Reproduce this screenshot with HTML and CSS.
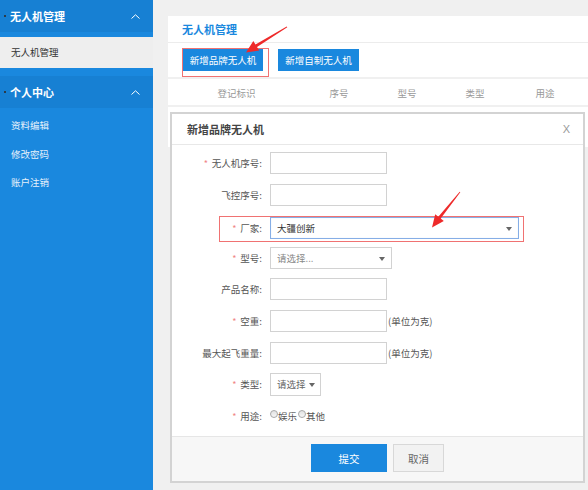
FILE: index.html
```html
<!DOCTYPE html>
<html lang="zh">
<head>
<meta charset="utf-8">
<title>无人机管理</title>
<link rel="stylesheet" href="styles.css">
</head>
<body>
<div class="page">
  <aside class="sidebar">
    <div class="side-head"><span class="dot"></span><span class="side-title">无人机管理</span>
      <svg class="chev" width="9" height="5" viewBox="0 0 9 5"><polyline points="0.5,4.5 4.5,0.8 8.5,4.5" fill="none" stroke="#fff" stroke-width="1"/></svg>
    </div>
    <div class="side-item active">无人机管理</div>
    <div class="side-head second"><span class="dot"></span><span class="side-title">个人中心</span>
      <svg class="chev" width="9" height="5" viewBox="0 0 9 5"><polyline points="0.5,4.5 4.5,0.8 8.5,4.5" fill="none" stroke="#fff" stroke-width="1"/></svg>
    </div>
    <div class="side-list">
      <div class="side-item">资料编辑</div>
      <div class="side-item">修改密码</div>
      <div class="side-item">账户注销</div>
    </div>
  </aside>
  <main class="main">
    <section class="card">
      <div class="card-title">无人机管理</div>
      <div class="toolbar">
        <button class="btn">新增品牌无人机</button>
        <button class="btn">新增自制无人机</button>
      </div>
      <div class="thead">
        <div>登记标识</div><div>序号</div><div>型号</div><div>类型</div><div>用途</div><div></div>
      </div>
      <div class="tbody"></div>
    </section>
  </main>
</div>

<div class="mark mark-btn"></div>

<div class="modal">
  <div class="modal-head"><span class="modal-title">新增品牌无人机</span><span class="close">X</span></div>
  <div class="modal-body">
    <div class="row"><label class="lbl"><span class="star">*</span>无人机序号:</label><span class="input"></span></div>
    <div class="row"><label class="lbl">飞控序号:</label><span class="input"></span></div>
    <div class="row factory"><label class="lbl"><span class="star">*</span>厂家:</label><span class="select focus w-lg">大疆创新<i class="tri"></i></span></div>
    <div class="row"><label class="lbl"><span class="star">*</span>型号:</label><span class="select placeholder w-md">请选择...<i class="tri"></i></span></div>
    <div class="row"><label class="lbl">产品名称:</label><span class="input"></span></div>
    <div class="row"><label class="lbl"><span class="star">*</span>空重:</label><span class="input"></span><span class="unit">(单位为克)</span></div>
    <div class="row"><label class="lbl">最大起飞重量:</label><span class="input"></span><span class="unit">(单位为克)</span></div>
    <div class="row"><label class="lbl"><span class="star">*</span>类型:</label><span class="select sm w-sm">请选择<i class="tri"></i></span></div>
    <div class="row"><label class="lbl"><span class="star">*</span>用途:</label><span class="radio"></span><span class="rtext">娱乐</span><span class="radio"></span><span class="rtext">其他</span></div>
    <div class="mark mark-row"></div>
  </div>
  <div class="modal-foot">
    <button class="fbtn primary">提交</button>
    <button class="fbtn">取消</button>
  </div>
</div>

<svg class="arrows" width="588" height="490" viewBox="0 0 588 490">
  <polygon fill="#ee2a2a" points="287.3,27.3 257.0,47.0 259.3,50.4 246,52.5 253.3,41.1 255.5,44.4 286.7,26.6"/>
  <polygon fill="#ee2a2a" points="460.3,192.2 440.7,218.6 443.8,221.1 432,227.5 435.2,214.2 438.3,216.7 459.7,191.7"/>
</svg>
</body>
</html>
```
FILE: styles.css
```css
* { box-sizing: border-box; margin: 0; padding: 0; }
html, body { width: 588px; height: 490px; overflow: hidden; }
body {
  background: #f0f0f0;
  font-family: "Noto Sans CJK SC", "Noto Sans", sans-serif;
  color: #333;
  position: relative;
}
.page { display: flex; height: 490px; }

.sidebar { width: 153px; background: #1a88de; flex: none; }
.side-head {
  height: 32px; background: #1780d3; display: flex; align-items: center;
  position: relative; padding-left: 4px;
}
.side-head.second { margin-top: 8px; }
.dot { width: 2px; height: 2px; background: #2b3b4a; margin-right: 4px; }
.side-title { color: #fff; font-weight: bold; font-size: 11px; }
.chev { position: absolute; left: 131px; top: 14px; }
.side-item { height: 31px; line-height: 31px; padding-left: 11px; font-size: 9.5px; color: #e6f1fb; }
.side-item.active { background: #eeeeee; color: #333; margin-top: 5px; }
.side-list { padding-top: 3px; }
.side-list .side-item { height: 28.5px; line-height: 28.5px; }

.main { flex: 1; padding: 16px 0 0 15px; }
.card { background: #fff; width: 420px; }
.card-title {
  height: 27px; line-height: 27px; padding-left: 14px; font-size: 11px; font-weight: bold;
  color: #1a88de; border-bottom: 1px solid #ececec;
}
.toolbar { display: flex; gap: 15px; padding: 6px 0 6px 15px; border-bottom: 2px solid #f0f0f0; }
.btn {
  height: 22px; width: 80px; background: #1a88de; color: #fff; border: none;
  font-family: inherit; font-size: 9.5px;
}
.toolbar .btn + .btn { width: 81px; }
.thead {
  display: grid; grid-template-columns: 137px 68px 68px 68px 72px 1fr;
  height: 28px; line-height: 28px; font-size: 9.5px; color: #999; text-align: center;
  border-bottom: 2px solid #f0f0f0;
}
.tbody { height: 40px; }

.mark { position: absolute; border: 1px solid #f07272; pointer-events: none; }
.mark-btn { left: 182px; top: 48px; width: 87px; height: 29px; }

.modal {
  position: absolute; left: 170px; top: 112px; width: 415px; height: 371px;
  background: #fff; border: 2px solid #d3d3d3; display: flex; flex-direction: column;
}
.modal-head {
  height: 31px; border-bottom: 1px solid #e8e8e8; display: flex; align-items: center;
  justify-content: space-between; padding: 0 13px 0 15px; flex: none;
}
.modal-title { font-size: 11px; font-weight: bold; color: #444; }
.close { font-family: "Liberation Sans", sans-serif; font-size: 11px; color: #9a9a9a; }
.modal-body { flex: 1; position: relative; display: flex; flex-direction: column; gap: 9.6px; padding-top: 7px; }
.row { display: flex; align-items: center; height: 22px; }
.row.factory { margin-top: 1.5px; margin-bottom: -1.5px; }
.lbl { width: 90px; text-align: right; font-size: 9.5px; color: #555; margin-right: 8px; flex: none; }
.star { color: #f08585; margin-right: 4px; font-size: 9px; }
.input { width: 117px; height: 22px; border: 1px solid #d2d2d2; background: #fff; }
.unit { font-size: 9.5px; color: #555; margin-left: 1px; }
.select {
  height: 22px; border: 1px solid #d2d2d2; font-size: 9.5px; color: #333;
  display: flex; align-items: center; padding-left: 6px; position: relative;
}
.select.focus { border-color: #86aee6; box-shadow: inset 0 0 1px #c9dcf5; }
.select.placeholder { color: #888; }
.select.sm { color: #666; }
.w-lg { width: 249px; }
.w-md { width: 122px; }
.w-sm { width: 51px; height: 23px; }
.tri {
  position: absolute; right: 6px; top: 9px; width: 0; height: 0;
  border-left: 3px solid transparent; border-right: 3px solid transparent; border-top: 4px solid #666;
}
.w-sm .tri { right: 5px; }
.radio {
  width: 8px; height: 8px; border-radius: 50%; border: 1px solid #a8a8a8;
  background: linear-gradient(#e2e2e2, #f6f6f6); margin-top: -3px;
}
.rtext { font-size: 9.5px; color: #555; margin-right: 1px; }
.mark-row { left: 47px; top: 71px; width: 305px; height: 26px; }

.modal-foot {
  height: 45px; flex: none; background: #f7f7f7; border-top: 1px solid #e6e6e6;
  display: flex; justify-content: center; align-items: flex-start; gap: 6px; padding-top: 7px;
}
.fbtn {
  height: 28px; width: 51px; font-family: inherit; font-size: 10.5px; color: #666;
  background: #f2f2f2; border: 1px solid #d8d8d8;
}
.fbtn.primary { width: 76px; background: #1a88de; color: #fff; border: none; }

.arrows { position: absolute; left: 0; top: 0; pointer-events: none; }
```
